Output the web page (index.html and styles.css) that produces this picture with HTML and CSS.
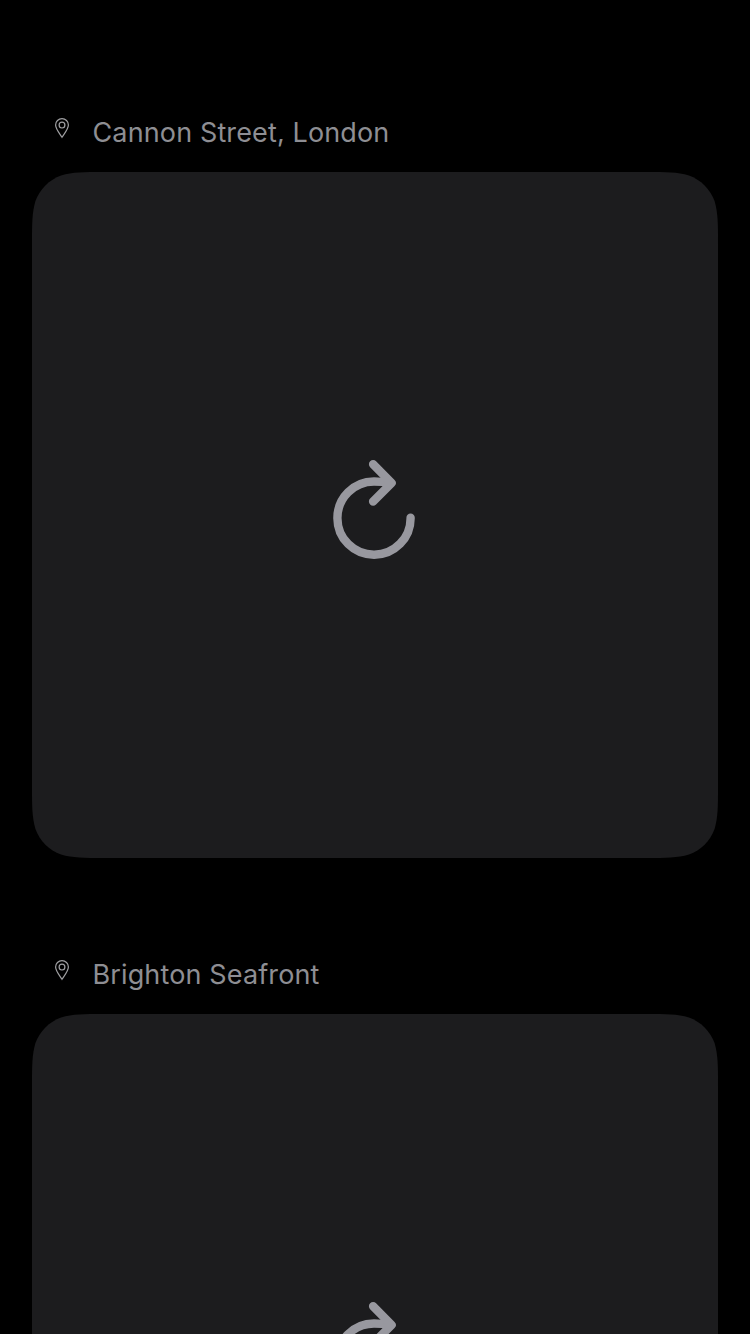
FILE: index.html
```html
<!DOCTYPE html>
<html lang="en">
<head>
<meta charset="utf-8">
<title>Locations</title>
<link rel="stylesheet" href="styles.css">
</head>
<body>
<svg class="defs" aria-hidden="true">
  <symbol id="pin" viewBox="0 0 16 22">
    <path d="M8 20.300C5.200 15.900 1.600 11.800 1.600 8A6.400 6.400 0 0 1 14.400 8C14.400 11.800 10.800 15.900 8 20.300Z"/>
    <circle cx="8" cy="8.100" r="2.900"/>
  </symbol>
  <symbol id="reload" viewBox="0 0 90 104">
    <path d="M82.600 61.800A36.600 36.600 0 1 1 46 25.500Q54 25.500 62 27"/>
    <path d="M45.100 8.200L63.600 27L45.100 45.500"/>
  </symbol>
</svg>
<main class="feed">
  <section class="place">
    <header class="place-header">
      <svg class="pin"><use href="#pin"/></svg>
      <h2 class="place-name">Cannon Street, London</h2>
    </header>
    <div class="card"><svg class="reload"><use href="#reload"/></svg></div>
  </section>
  <section class="place">
    <header class="place-header">
      <svg class="pin"><use href="#pin"/></svg>
      <h2 class="place-name">Brighton Seafront</h2>
    </header>
    <div class="card"><svg class="reload"><use href="#reload"/></svg></div>
  </section>
</main>
</body>
</html>
```

FILE: styles.css
```css
* {
  box-sizing: border-box;
}

body {
  margin: 0;
  background: #000;
  font-family: Inter, "Liberation Sans", sans-serif;
}

.defs {
  display: block;
  width: 0;
  height: 0;
}

.feed {
  display: flex;
  flex-direction: column;
  gap: 82px;
  height: 1334px;
  padding: 98px 32px 0;
  overflow: hidden;
}

.place {
  flex: none;
}

.place-header {
  display: flex;
  align-items: flex-start;
  gap: 22.5px;
  height: 74px;
  padding: 19px 0 0 22px;
}

.pin {
  flex: none;
  width: 16px;
  height: 22px;
  fill: none;
  stroke: #a0a0a3;
  stroke-width: 1.2;
}

.place-name {
  margin: 0;
  color: #8e8e93;
  font-size: 27px;
  font-weight: 400;
  line-height: 32px;
  letter-spacing: 0.13px;
  white-space: nowrap;
}

.card {
  display: flex;
  align-items: center;
  justify-content: center;
  width: 686px;
  height: 686px;
  background: #1c1c1e;
  /* Continuous-curvature corners */
  clip-path: path("M72 0H614C634.5 0 645 0 656.95 3.45C668.85 7.78 678.22 17.15 682.55 29.05C686 41 686 51.500 686 72V614C686 634.5 686 645 682.55 656.95C678.22 668.85 668.85 678.22 656.95 682.55C645 686 634.5 686 614 686H72C51.5 686 41 686 29.05 682.55C17.15 678.22 7.78 668.85 3.45 656.95C0 645 0 634.5 0 614V72C0 51.5 0 41 3.45 29.05C7.78 17.15 17.15 7.78 29.05 3.45C41 0 51.5 0 72 0Z");
}

.reload {
  width: 90px;
  height: 104px;
  margin: 0 4px 14px 0;
  fill: none;
  stroke: #98989f;
  stroke-width: 8.4;
  stroke-linecap: round;
  stroke-linejoin: round;
}
```
